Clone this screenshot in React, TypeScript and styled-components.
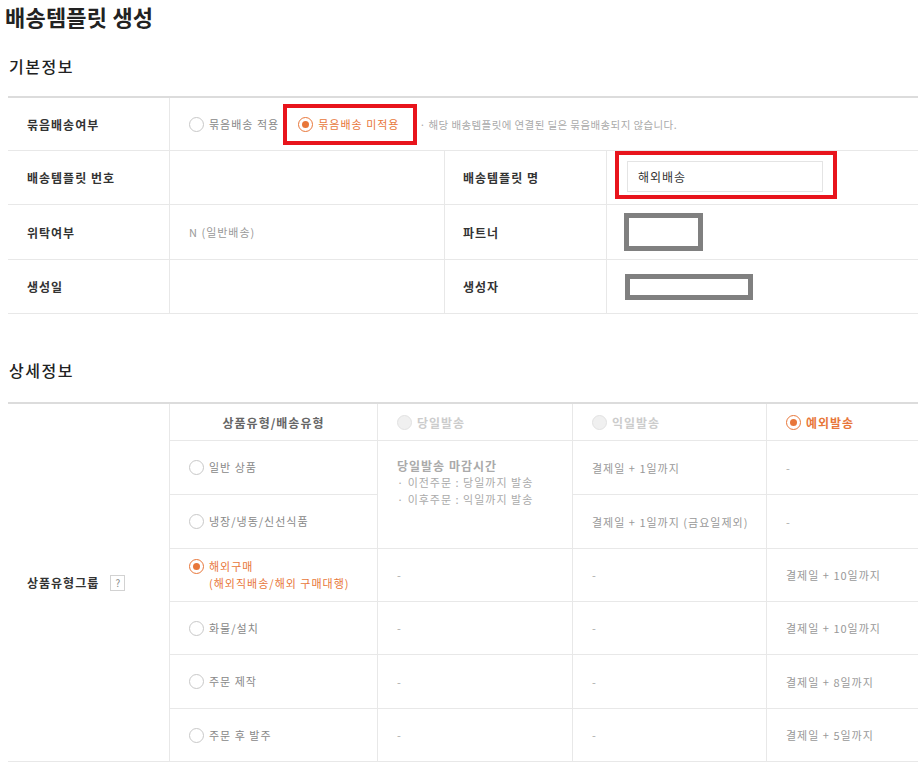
import styled, { createGlobalStyle } from 'styled-components'

type Tone = 'off' | 'on' | 'disabled'

const ORANGE = '#e8773a'

const GlobalStyle = createGlobalStyle`
  html, body {
    margin: 0;
    padding: 0;
    background: #fff;
  }
  body {
    font-family: "Noto Sans CJK KR", "Noto Sans", sans-serif;
    color: #333;
  }
  * {
    box-sizing: border-box;
  }
`

const Page = styled.div`
  width: 918px;
  padding-left: 8px;
  overflow: hidden;
`

const Title = styled.h1`
  margin: 0 0 0 -3px;
  font-size: 22px;
  line-height: 32px;
  font-weight: 700;
  letter-spacing: 0.2px;
  color: #222;
`

const SectionTitle = styled.h2<{ $top: number; $bottom: number }>`
  margin: ${(p) => p.$top}px 0 ${(p) => p.$bottom}px 1px;
  font-size: 16px;
  line-height: 24px;
  font-weight: 500;
  letter-spacing: 1.5px;
  color: #222;
`

const InfoGrid = styled.div`
  display: grid;
  grid-template-columns: 162px 275px 162px 1fr;
  grid-template-rows: 53px 54px 55px 54px;
  border-top: 2px solid #dcdcdc;
`

const DetailGrid = styled.div`
  display: grid;
  grid-template-columns: 162px 208px 195px 194px 1fr;
  grid-template-rows: 37px 54px 54px 53px 53px 54px 53px;
  border-top: 2px solid #dcdcdc;
`

const Cell = styled.div<{ $span?: number; $last?: boolean; $pad?: number }>`
  display: flex;
  align-items: center;
  min-width: 0;
  padding-left: ${(p) => p.$pad ?? 19}px;
  grid-column: span ${(p) => p.$span ?? 1};
  border-bottom: 1px solid #e8e8e8;
  border-right: ${(p) => (p.$last ? 'none' : '1px solid #e8e8e8')};
  font-size: 11px;
  letter-spacing: 1px;
  color: #999;
  white-space: nowrap;
`

const Label = styled(Cell)`
  font-size: 12px;
  font-weight: 700;
  color: #333;
`

const TopCell = styled(Cell)`
  align-items: flex-start;
`

const GroupCell = styled(Label)`
  grid-column: 1;
  grid-row: 1 / 8;
  gap: 11px;
`

const HeadCell = styled(Cell)<{ $center?: boolean }>`
  justify-content: ${(p) => (p.$center ? 'center' : 'flex-start')};
  padding-left: ${(p) => (p.$center ? 0 : 19)}px;
  font-size: 12px;
  font-weight: 700;
  color: #666;
`

const MergedCell = styled(Cell)`
  grid-column: 3;
  grid-row: 2 / 4;
  flex-direction: column;
  align-items: flex-start;
  padding-top: 16px;
  line-height: 17px;
  color: #aaa;
`

const CutoffTitle = styled.strong`
  font-size: 12px;
  color: #aaa;
`

const Dash = styled.span`
  color: #aaa;
`

const HelpBox = styled.span`
  display: inline-flex;
  align-items: center;
  justify-content: center;
  width: 15px;
  height: 16px;
  border: 1px solid #d2d2d2;
  font-size: 10px;
  font-weight: 400;
  letter-spacing: 0;
  color: #888;
`

const Option = styled.label<{ $tone: Tone; $bold?: boolean }>`
  display: inline-flex;
  align-items: ${(p) => (p.$bold ? 'center' : 'flex-start')};
  gap: 5px;
  font-size: ${(p) => (p.$bold ? 12 : 11)}px;
  font-weight: ${(p) => (p.$bold ? 700 : 400)};
  line-height: 17px;
  letter-spacing: 1px;
  color: ${(p) => (p.$tone === 'on' ? ORANGE : p.$tone === 'disabled' ? '#ccc' : '#888')};
`

const RadioMark = styled.span<{ $tone: Tone }>`
  display: inline-flex;
  align-items: center;
  justify-content: center;
  flex-shrink: 0;
  width: 15px;
  height: 15px;
  margin-top: 1px;
  border-radius: 50%;
  border: 1px solid ${(p) => (p.$tone === 'on' ? ORANGE : p.$tone === 'disabled' ? '#e2e2e2' : '#c8c8c8')};
  background: ${(p) => (p.$tone === 'disabled' ? '#f0f0f0' : '#fff')};

  &::after {
    content: '';
    display: ${(p) => (p.$tone === 'on' ? 'block' : 'none')};
    width: 7px;
    height: 7px;
    border-radius: 50%;
    background: ${ORANGE};
  }
`

const Highlight = styled.div<{ $pad: string }>`
  display: inline-flex;
  align-items: center;
  border: 4px solid #e8141c;
  padding: ${(p) => p.$pad};
`

const Note = styled.span`
  margin-left: 3px;
  font-size: 10.5px;
  letter-spacing: 0.4px;
  color: #aaa;
`

const TextInput = styled.div`
  display: flex;
  align-items: center;
  width: 196px;
  height: 31px;
  padding-left: 10px;
  border: 1px solid #e4e4e4;
  font-size: 12px;
  letter-spacing: 1px;
  color: #333;
`

const Redacted = styled.div<{ $w: number; $h: number }>`
  width: ${(p) => p.$w}px;
  height: ${(p) => p.$h}px;
  border: 5px solid #808080;
  background: #fff;
`

const Radio = ({ tone, bold, children }: { tone: Tone; bold?: boolean; children: React.ReactNode }) => (
  <Option $tone={tone} $bold={bold}>
    <RadioMark $tone={tone} />
    <span>{children}</span>
  </Option>
)

const productRows: { name: React.ReactNode; tone: Tone; nextDay: string; special: string }[] = [
  { name: '일반 상품', tone: 'off', nextDay: '결제일 + 1일까지', special: '-' },
  { name: '냉장/냉동/신선식품', tone: 'off', nextDay: '결제일 + 1일까지 (금요일제외)', special: '-' },
  {
    name: (
      <>
        해외구매
        <br />
        (해외직배송/해외 구매대행)
      </>
    ),
    tone: 'on',
    nextDay: '-',
    special: '결제일 + 10일까지',
  },
  { name: '화물/설치', tone: 'off', nextDay: '-', special: '결제일 + 10일까지' },
  { name: '주문 제작', tone: 'off', nextDay: '-', special: '결제일 + 8일까지' },
  { name: '주문 후 발주', tone: 'off', nextDay: '-', special: '결제일 + 5일까지' },
]

export default function App() {
  return (
    <Page>
      <GlobalStyle />
      <Title>배송템플릿 생성</Title>

      <SectionTitle $top={22} $bottom={18}>기본정보</SectionTitle>
      <InfoGrid>
        <Label>묶음배송여부</Label>
        <Cell $span={3} $last>
          <Radio tone="off">묶음배송 적용</Radio>
          <Highlight $pad="0 13px 0 11px" style={{ height: 41, marginLeft: 4 }}>
            <Radio tone="on">묶음배송 미적용</Radio>
          </Highlight>
          <Note>· 해당 배송템플릿에 연결된 딜은 묶음배송되지 않습니다.</Note>
        </Cell>

        <Label>배송템플릿 번호</Label>
        <Cell />
        <Label $pad={18}>배송템플릿 명</Label>
        <TopCell $last $pad={8}>
          <Highlight $pad="6px 10px 3px 8px">
            <TextInput>해외배송</TextInput>
          </Highlight>
        </TopCell>

        <Label>위탁여부</Label>
        <Cell>N (일반배송)</Cell>
        <Label $pad={18}>파트너</Label>
        <Cell $last $pad={17}>
          <Redacted $w={79} $h={38} />
        </Cell>

        <Label>생성일</Label>
        <Cell />
        <Label $pad={18}>생성자</Label>
        <Cell $last $pad={18}>
          <Redacted $w={128} $h={26} />
        </Cell>
      </InfoGrid>

      <SectionTitle $top={44} $bottom={20}>상세정보</SectionTitle>
      <DetailGrid>
        <GroupCell>
          상품유형그룹
          <HelpBox>?</HelpBox>
        </GroupCell>

        <HeadCell $center>상품유형/배송유형</HeadCell>
        <HeadCell>
          <Radio tone="disabled" bold>당일발송</Radio>
        </HeadCell>
        <HeadCell>
          <Radio tone="disabled" bold>익일발송</Radio>
        </HeadCell>
        <HeadCell $last>
          <Radio tone="on" bold>예외발송</Radio>
        </HeadCell>

        <MergedCell>
          <CutoffTitle>당일발송 마감시간</CutoffTitle>
          <span>· 이전주문 : 당일까지 발송</span>
          <span>· 이후주문 : 익일까지 발송</span>
        </MergedCell>

        {productRows.map((row, i) => (
          <Row key={i} index={i} {...row} />
        ))}
      </DetailGrid>
    </Page>
  )
}

const Row = ({
  index,
  name,
  tone,
  nextDay,
  special,
}: {
  index: number
  name: React.ReactNode
  tone: Tone
  nextDay: string
  special: string
}) => (
  <>
    <Cell>
      <Radio tone={tone}>{name}</Radio>
    </Cell>
    {index >= 2 && (
      <Cell>
        <Dash>-</Dash>
      </Cell>
    )}
    <Cell>{nextDay === '-' ? <Dash>-</Dash> : nextDay}</Cell>
    <Cell $last>{special === '-' ? <Dash>-</Dash> : special}</Cell>
  </>
)
